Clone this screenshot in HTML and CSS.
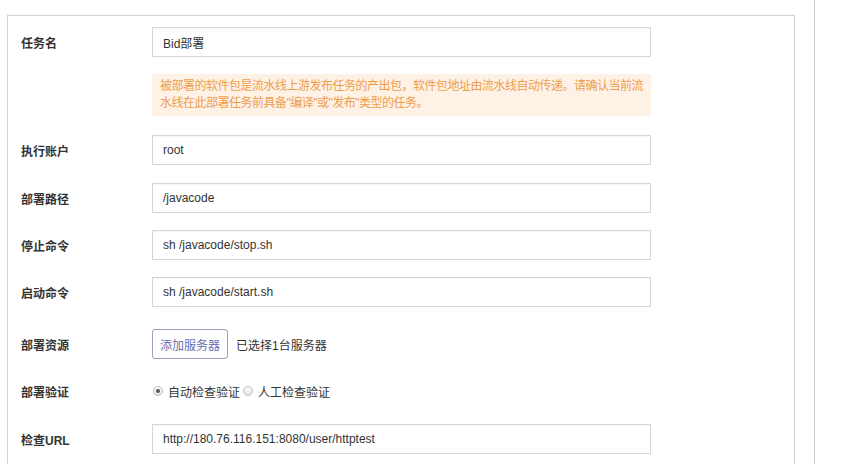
FILE: index.html
```html
<!DOCTYPE html>
<html lang="zh-CN">
<head>
  <meta charset="UTF-8" />
  <meta name="viewport" content="width=device-width, initial-scale=1.0" />
  <title>部署任务</title>
  <link rel="stylesheet" href="styles.css">
</head>
<body>
  <div class="page">
    <div class="content">
      <div class="panel">
        <div class="row row-first">
          <label class="label">任务名</label>
          <input class="input" type="text" value="Bid部署" />
        </div>
        <div class="row row-notice">
          <span class="label"></span>
          <div class="notice">被部署的软件包是流水线上游发布任务的产出包，软件包地址由流水线自动传递。请确认当前流水线在此部署任务前具备"编译"或"发布"类型的任务。</div>
        </div>
        <div class="row row-after-notice">
          <label class="label">执行账户</label>
          <input class="input" type="text" value="root" />
        </div>
        <div class="row row-tight">
          <label class="label">部署路径</label>
          <input class="input" type="text" value="/javacode" />
        </div>
        <div class="row">
          <label class="label">停止命令</label>
          <input class="input" type="text" value="sh /javacode/stop.sh" />
        </div>
        <div class="row">
          <label class="label">启动命令</label>
          <input class="input" type="text" value="sh /javacode/start.sh" />
        </div>
        <div class="row row-resource">
          <label class="label">部署资源</label>
          <div class="field">
            <button class="btn" type="button">添加服务器</button>
            <span class="selected">已选择1台服务器</span>
          </div>
        </div>
        <div class="row">
          <label class="label">部署验证</label>
          <div class="field radios">
            <label class="radio"><span class="dot checked"></span>自动检查验证</label>
            <label class="radio"><span class="dot"></span>人工检查验证</label>
          </div>
        </div>
        <div class="row row-url">
          <label class="label">检查URL</label>
          <input class="input" type="text" value="http://180.76.116.151:8080/user/httptest" />
        </div>
      </div>
    </div>
    <div class="side"></div>
  </div>
</body>
</html>
```

FILE: styles.css
```css
body {
  margin: 0;
  background-color: #fff;
  color: #333;
  font-family: "Liberation Sans", "Noto Sans CJK SC", sans-serif;
  font-size: 12px;
}

.page {
  display: flex;
  height: 464px;
  overflow: hidden;
}

.content {
  width: 814px;
}

.side {
  flex: 1;
  border-left: 1px solid #cfcfcf;
}

.panel {
  margin: 15px 0 0 7px;
  width: 788px;
  height: 460px;
  border: 1px solid #d3d3d3;
  border-bottom: none;
  padding-left: 13px;
  box-sizing: border-box;
  box-shadow: 0 -1px 1px rgba(0, 0, 0, 0.03);
}

.row {
  display: grid;
  grid-template-columns: 131px 499px;
  align-items: center;
  margin-top: 17px;
}

.row-first {
  margin-top: 11px;
}

.row-after-notice {
  margin-top: 19px;
}

.row-tight {
  margin-top: 18px;
}

.row-resource {
  margin-top: 22px;
}

.row-url {
  margin-top: 18px;
}

.label {
  font-family: "Liberation Sans", "Noto Sans CJK SC", sans-serif;
  font-weight: 600;
  color: #333;
}

.input {
  height: 30px;
  box-sizing: border-box;
  border: 1px solid #d6d6d6;
  box-shadow: inset 0 1px 1px rgba(0, 0, 0, 0.04);
  padding: 0 10px;
  font-family: "Liberation Sans", "Noto Sans CJK SC", sans-serif;
  font-size: 12px;
  color: #333;
  outline: none;
}

.notice {
  background-color: #fef2e6;
  color: #ef9d4c;
  padding: 4px 6px 4px 8px;
  line-height: 17px;
  letter-spacing: -0.5px;
  height: 42px;
  box-sizing: border-box;
}

.field {
  display: flex;
  align-items: center;
  height: 30px;
}

.btn {
  height: 30px;
  padding: 0 7px;
  border: 1px solid #9da1b4;
  border-radius: 3px;
  background-color: #fff;
  color: #6a6db3;
  font-family: "Liberation Sans", "Noto Sans CJK SC", sans-serif;
  font-size: 12px;
  width: 76px;
}

.selected {
  margin-left: 8px;
}

.radios {
  gap: 2px;
}

.radio {
  display: flex;
  align-items: center;
}

.dot {
  width: 10px;
  height: 10px;
  border-radius: 50%;
  border: 1px solid #bdbdbd;
  background: linear-gradient(#fdfdfd, #e4e4e4);
  box-sizing: border-box;
  margin-left: 1px;
  margin-right: 5px;
  position: relative;
}

.dot.checked::after {
  content: "";
  position: absolute;
  left: 2px;
  top: 2px;
  width: 4px;
  height: 4px;
  border-radius: 50%;
  background-color: #555;
}
```
